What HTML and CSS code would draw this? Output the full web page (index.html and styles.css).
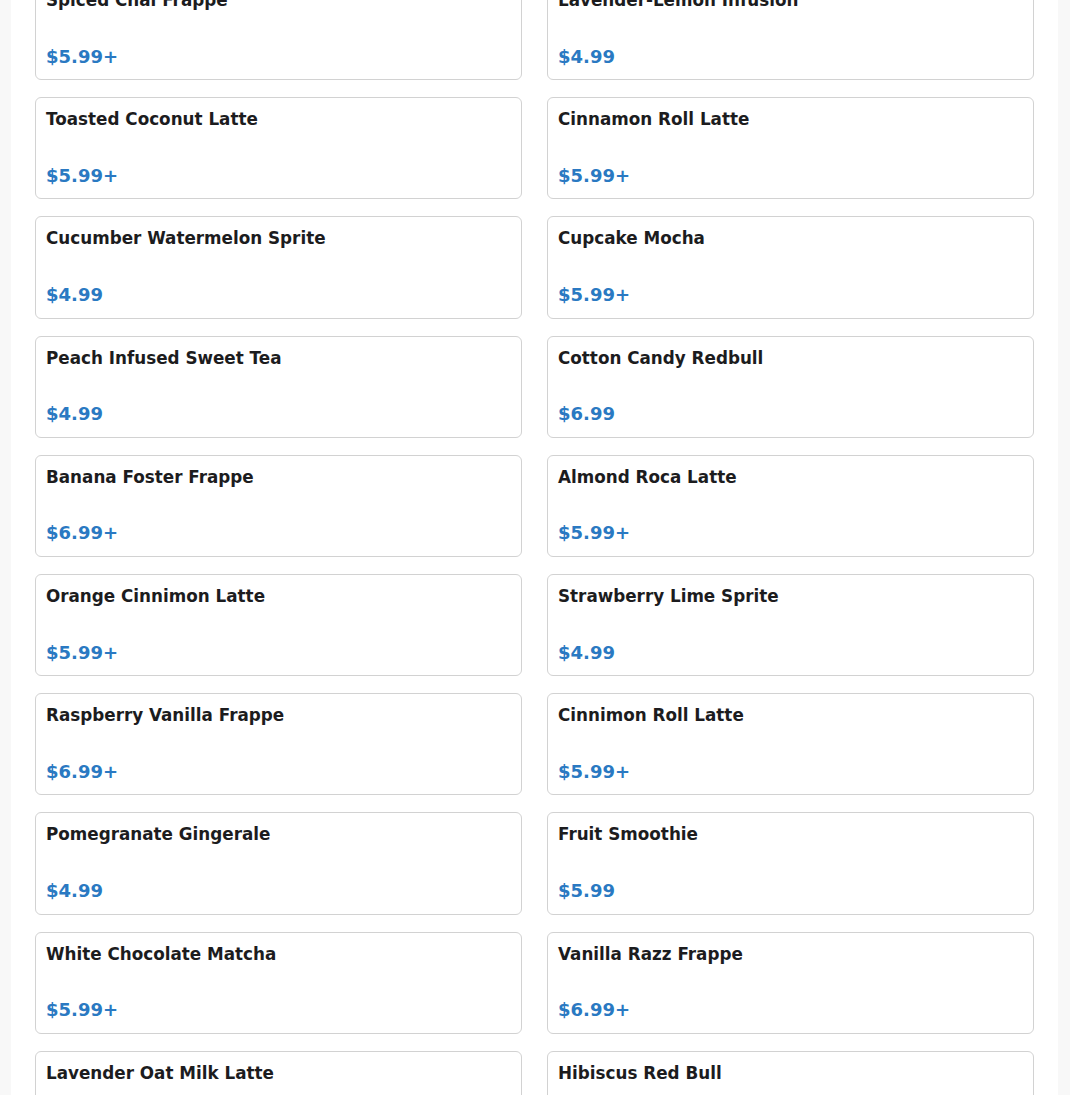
FILE: index.html
```html
<!DOCTYPE html>
<html lang="en">
<head>
<meta charset="utf-8">
<title>Menu</title>
<link rel="stylesheet" href="styles.css">
</head>
<body>
<main class="page">
  <div class="menu-grid">
    <div class="item"><h3 class="item-name">Spiced Chai Frappe</h3><div class="item-price">$5.99+</div></div>
    <div class="item"><h3 class="item-name">Lavender-Lemon Infusion</h3><div class="item-price">$4.99</div></div>
    <div class="item"><h3 class="item-name">Toasted Coconut Latte</h3><div class="item-price">$5.99+</div></div>
    <div class="item"><h3 class="item-name">Cinnamon Roll Latte</h3><div class="item-price">$5.99+</div></div>
    <div class="item"><h3 class="item-name">Cucumber Watermelon Sprite</h3><div class="item-price">$4.99</div></div>
    <div class="item"><h3 class="item-name">Cupcake Mocha</h3><div class="item-price">$5.99+</div></div>
    <div class="item"><h3 class="item-name">Peach Infused Sweet Tea</h3><div class="item-price">$4.99</div></div>
    <div class="item"><h3 class="item-name">Cotton Candy Redbull</h3><div class="item-price">$6.99</div></div>
    <div class="item"><h3 class="item-name">Banana Foster Frappe</h3><div class="item-price">$6.99+</div></div>
    <div class="item"><h3 class="item-name">Almond Roca Latte</h3><div class="item-price">$5.99+</div></div>
    <div class="item"><h3 class="item-name">Orange Cinnimon Latte</h3><div class="item-price">$5.99+</div></div>
    <div class="item"><h3 class="item-name">Strawberry Lime Sprite</h3><div class="item-price">$4.99</div></div>
    <div class="item"><h3 class="item-name">Raspberry Vanilla Frappe</h3><div class="item-price">$6.99+</div></div>
    <div class="item"><h3 class="item-name">Cinnimon Roll Latte</h3><div class="item-price">$5.99+</div></div>
    <div class="item"><h3 class="item-name">Pomegranate Gingerale</h3><div class="item-price">$4.99</div></div>
    <div class="item"><h3 class="item-name">Fruit Smoothie</h3><div class="item-price">$5.99</div></div>
    <div class="item"><h3 class="item-name">White Chocolate Matcha</h3><div class="item-price">$5.99+</div></div>
    <div class="item"><h3 class="item-name">Vanilla Razz Frappe</h3><div class="item-price">$6.99+</div></div>
    <div class="item"><h3 class="item-name">Lavender Oat Milk Latte</h3><div class="item-price">$5.99+</div></div>
    <div class="item"><h3 class="item-name">Hibiscus Red Bull</h3><div class="item-price">$6.99</div></div>
  </div>
</main>
</body>
</html>
```

FILE: styles.css
```css
html, body {
  margin: 0;
  padding: 0;
  background: #f8f8f8;
  font-family: "DejaVu Sans", Verdana, sans-serif;
  overflow: hidden;
}

.page {
  margin: 0 12px 0 11px;
  background: #ffffff;
  padding: 0 24px 40px;
  min-height: 1200px;
}

.menu-grid {
  display: grid;
  grid-template-columns: 1fr 1fr;
  column-gap: 25px;
  row-gap: 17px;
  margin-top: -22px;
}

.item {
  border: 1px solid #d2d2d2;
  border-radius: 6px;
  padding: 11px 10px 12px;
  height: 102.2px;
  box-sizing: border-box;
  display: flex;
  flex-direction: column;
  justify-content: space-between;
}

.item-name {
  margin: 0;
  font-size: 16.8px;
  line-height: 1.2;
  font-weight: bold;
  color: #1c1c1e;
}

.item-price {
  font-size: 18px;
  line-height: 1.2;
  font-weight: bold;
  color: #2a79c2;
}
```
